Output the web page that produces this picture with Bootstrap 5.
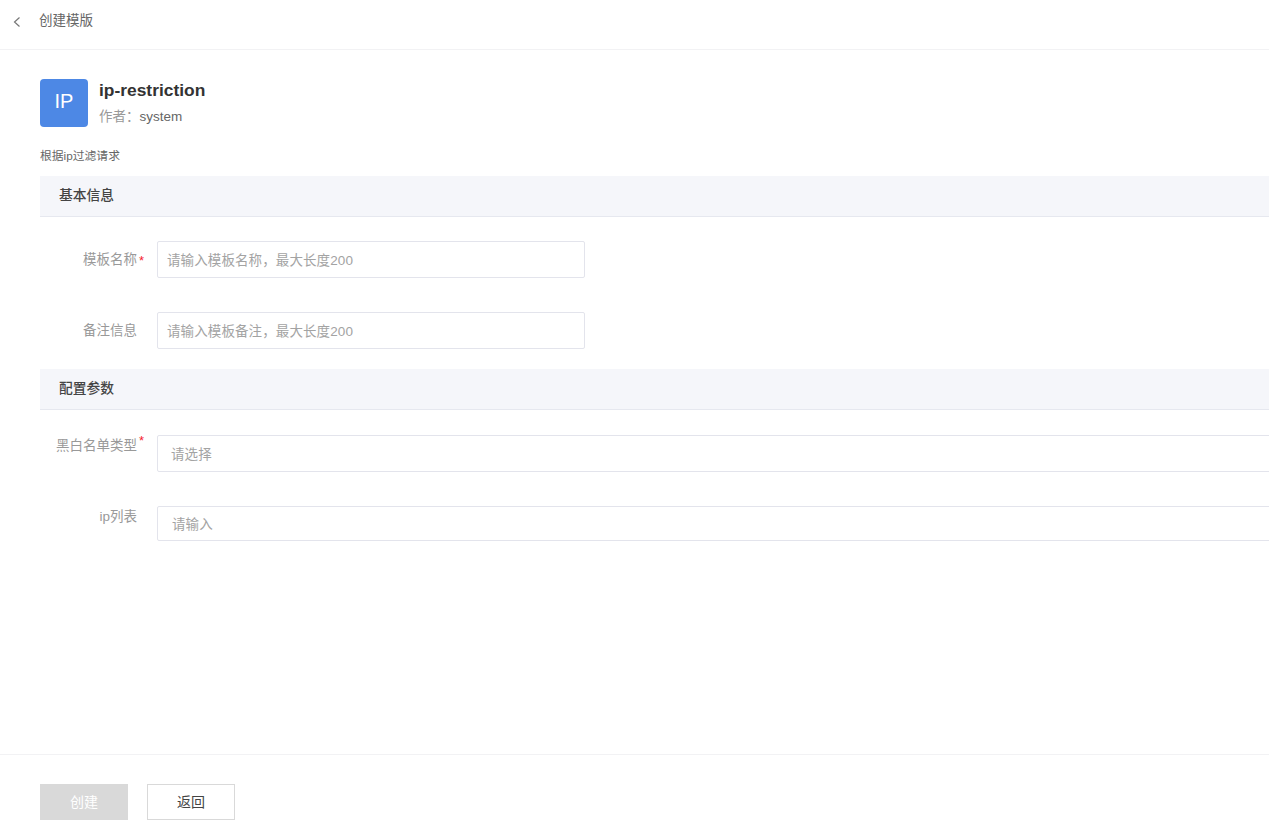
<!DOCTYPE html>
<html lang="zh">
<head>
<meta charset="utf-8">
<title>创建模版</title>
<link href="https://cdn.jsdelivr.net/npm/bootstrap@5.3.0/dist/css/bootstrap.min.css" rel="stylesheet">
<style>
html,body{height:832px;overflow:hidden;background:#fff;}
body{font-family:"Liberation Sans","Noto Sans CJK SC",sans-serif;font-size:13.5px;color:#333;}
.top-bar{height:50px;border-bottom:1px solid #f2f2f4;padding-left:12px;gap:17px;color:#666;font-size:13.5px;padding-bottom:6px;}
.main-area{height:704px;padding:29px 0 0 40px;overflow:hidden;}
.logo-box{width:48px;height:48px;background:#4d88e5;border-radius:4px;color:#fff;font-size:20px;padding-bottom:5px;}
.plugin-text{margin-left:3px;}
.plugin-name{font-size:17.4px;font-weight:700;line-height:22px;color:#333;margin:0;}
.plugin-author{font-size:13.5px;line-height:20px;color:#666;margin-top:6px;}
.plugin-author span{color:#999;font-family:"Liberation Sans","Noto Sans CJK TC",sans-serif;}
.plugin-desc{font-size:11.8px;line-height:16px;color:#666;margin:21px 0 12px;}
.sect-bar{height:41px;background:#f5f6fa;border-bottom:1px solid #e6e8ef;padding:1px 0 0 19px;font-size:13.75px;color:#444;font-weight:500;}
.field-label{width:97px;text-align:right;color:#999;font-size:13.5px;flex:none;margin:0;padding-top:2px;}
.req-mark{width:20px;flex:none;color:#f5222d;font-size:13px;padding:2px 0 0 2px;}
.field-box{height:37px;border:1px solid #e3e4ec;border-radius:2px;padding:1px 9px 0;font-size:13.5px;letter-spacing:.1px;background:#fff;color:#333;}
.field-box::placeholder{color:#a3a3a3;opacity:1;}
.box-short{width:428px;}
.box-wide{width:1200px;flex:none;border-radius:2px 0 0 2px;padding-left:13px;}
.form-group-a{padding-top:24px;height:152px;}
.form-group-b{padding-top:25px;}
.gap-row{margin-bottom:34px;}
.top-align{line-height:22px;padding-top:0;}
.star-top{line-height:12px;padding-top:0;}
.h-35{height:35px;padding-left:14px;}
.action-bar{height:78px;border-top:1px solid #f2f2f4;padding:29px 0 0 40px;gap:19px;}
.action-btn{width:88px;height:36px;border-radius:0;font-size:14px;padding:0;line-height:34px;}
.btn-off,.btn-off:disabled{background:#d9d9d9;border:1px solid #d9d9d9;color:#fff;opacity:1;}
.btn-back{background:#fff;border:1px solid #d9d9d9;color:#444;}
</style>
</head>
<body>
<div class="top-bar d-flex align-items-center">
  <svg width="10" height="12" viewBox="0 0 10 12" fill="none" stroke="#777" stroke-width="1.2"><path d="M7.5 1.5 2.5 6l5 4.5"/></svg>
  <span>创建模版</span>
</div>
<div class="main-area">
  <div class="d-flex gap-2 align-items-start">
    <div class="logo-box d-flex align-items-center justify-content-center flex-shrink-0">IP</div>
    <div class="plugin-text">
      <p class="plugin-name">ip-restriction</p>
      <div class="plugin-author"><span>作者：</span>system</div>
    </div>
  </div>
  <p class="plugin-desc">根据ip过滤请求</p>
  <div class="sect-bar d-flex align-items-center">基本信息</div>
  <div class="form-group-a">
    <div class="d-flex align-items-center gap-row">
      <label class="field-label">模板名称</label><span class="req-mark">*</span>
      <input class="field-box box-short" placeholder="请输入模板名称，最大长度200">
    </div>
    <div class="d-flex align-items-center">
      <label class="field-label">备注信息</label><span class="req-mark"></span>
      <input class="field-box box-short" placeholder="请输入模板备注，最大长度200">
    </div>
  </div>
  <div class="sect-bar d-flex align-items-center">配置参数</div>
  <div class="form-group-b">
    <div class="d-flex align-items-start gap-row">
      <label class="field-label top-align">黑白名单类型</label><span class="req-mark star-top">*</span>
      <input class="field-box box-wide" placeholder="请选择">
    </div>
    <div class="d-flex align-items-start">
      <label class="field-label top-align">ip列表</label><span class="req-mark"></span>
      <input class="field-box box-wide h-35" placeholder="请输入">
    </div>
  </div>
</div>
<div class="action-bar d-flex align-items-start">
  <button class="btn action-btn btn-off" disabled>创建</button>
  <button class="btn action-btn btn-back">返回</button>
</div>
<script src="https://cdn.jsdelivr.net/npm/bootstrap@5.3.0/dist/js/bootstrap.bundle.min.js"></script>
</body>
</html>
